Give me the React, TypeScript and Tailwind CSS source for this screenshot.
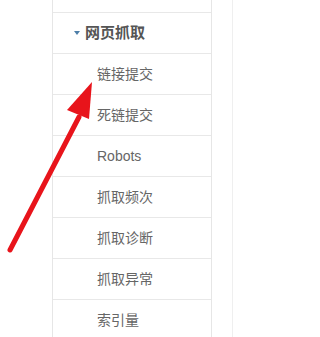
const ITEMS = ['链接提交', '死链提交', 'Robots', '抓取频次', '抓取诊断', '抓取异常', '索引量'];

export default function App() {
  return (
    <div
      className="relative w-[243px] h-[337px] overflow-hidden bg-white"
      style={{ fontFamily: '"Liberation Sans", "Noto Sans CJK SC", sans-serif' }}
    >
      <div className="flex h-full">
        <div className="w-[52px] shrink-0" />
        <div className="w-[160px] shrink-0 border-l border-r border-[#e6e6e6]">
          <div className="h-[12px]" />
          {/* section header */}
          <div className="flex h-[41px] items-center border-t border-[#e8e8e8] pl-[21px]">
            <span className="mr-[5px] h-0 w-0 border-x-[3.5px] border-t-[4px] border-x-transparent border-t-[#4d7ea8]" />
            <span className="text-[15px] font-bold text-[#555]">网页抓取</span>
          </div>
          {ITEMS.map(item => (
            <div key={item} className="flex h-[41px] items-center border-t border-[#e8e8e8] pl-[44px] text-[14px] text-[#666]">
              {item}
            </div>
          ))}
        </div>
        <div className="w-[20px] shrink-0" />
        <div className="w-px shrink-0 bg-[#efefef]" />
      </div>

      {/* red annotation arrow */}
      <svg className="absolute left-0 top-0" width="243" height="337" viewBox="0 0 243 337">
        <line x1="10" y1="250" x2="79" y2="117" stroke="#e8141b" strokeWidth="5" strokeLinecap="round" />
        <polygon points="92,82 67,110 89,119" fill="#e8141b" />
      </svg>
    </div>
  );
}
